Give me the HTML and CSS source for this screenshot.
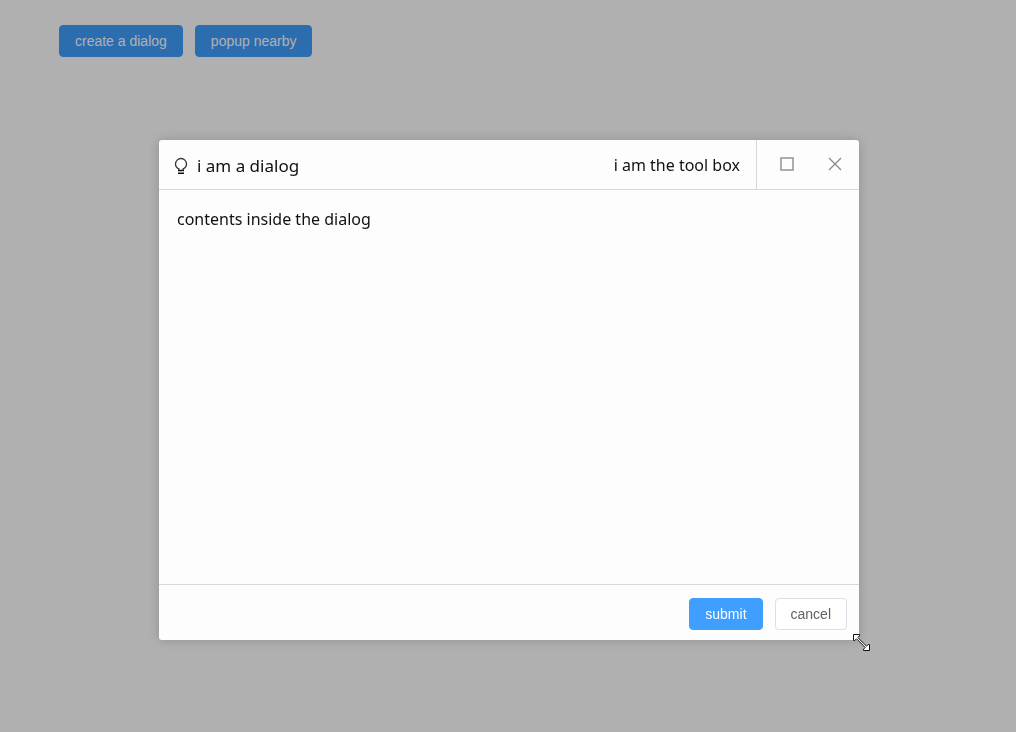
FILE: index.html
```html
<!DOCTYPE html>
<html lang="en">
<head>
<meta charset="utf-8">
<meta name="viewport" content="width=device-width, initial-scale=1">
<title>Dialog</title>
<link rel="stylesheet" href="styles.css">
</head>
<body>
<main class="page">
  <button type="button" class="btn btn-primary">create a dialog</button>
  <button type="button" class="btn btn-primary">popup nearby</button>
</main>
<div class="overlay">
  <section class="dialog" role="dialog" aria-modal="true" aria-labelledby="dialog-title">
    <header class="dialog-header">
      <div class="heading">
        <svg class="bulb" viewBox="0 0 14 18" aria-hidden="true">
          <path d="M4.8 13.2V11.8C2.6 10.9 1.5 9 1.5 7a5.5 5.5 0 0 1 11 0c0 2-1.1 3.9-3.3 4.8v1.4" fill="none" stroke="#333" stroke-width="1.3"/>
          <path d="M4 13.5h6M4 16.3h6" stroke="#111" stroke-width="1.4"/>
        </svg>
        <h1 class="dialog-title" id="dialog-title">i am a dialog</h1>
      </div>
      <div class="toolbox">i am the tool box</div>
      <div class="window-actions">
        <button type="button" class="icon-btn" aria-label="maximize">
          <svg viewBox="0 0 14 14"><rect x="1" y="1" width="12" height="12" fill="none" stroke="#999" stroke-width="1.6"/></svg>
        </button>
        <button type="button" class="icon-btn" aria-label="close">
          <svg viewBox="0 0 14 14"><path d="M1 1l12 12M13 1L1 13" fill="none" stroke="#8c8c8c" stroke-width="1.4"/></svg>
        </button>
      </div>
    </header>
    <div class="dialog-body">contents inside the dialog</div>
    <footer class="dialog-footer">
      <button type="button" class="btn btn-primary">submit</button>
      <button type="button" class="btn">cancel</button>
    </footer>
    <svg class="resize-cursor" viewBox="0 0 17 17" aria-hidden="true">
      <path d="M.5.5h6v1.3L4.8 3.5l8.7 8.7 1.7-1.7h1.3v6h-6v-1.3l1.7-1.7-8.7-8.7-1.7 1.7H.5z" fill="#fff" stroke="#111" stroke-width="1"/>
    </svg>
  </section>
</div>
</body>
</html>
```
FILE: styles.css
```css
* { box-sizing: border-box; }

body {
  margin: 0;
  min-height: 100vh;
  background: #fff;
  color: #111;
  font: 16px/24px "Noto Sans", "Open Sans", sans-serif;
}

.page {
  display: flex;
  gap: 12px;
  padding: 25px 59px;
}

.btn {
  height: 32px;
  padding: 0 15px;
  border: 1px solid #dcdfe6;
  border-radius: 4px;
  background: #fff;
  color: #606266;
  font: 14px/14px "Liberation Sans", Arial, sans-serif;
}

.btn-primary {
  border-color: #409eff;
  background: #409eff;
  color: #fff;
}

.overlay {
  position: fixed;
  inset: 0;
  background: rgba(0, 0, 0, 0.31);
}

.dialog {
  position: absolute;
  top: 140px;
  left: 159px;
  display: flex;
  flex-direction: column;
  width: 700px;
  min-height: 500px;
  border-radius: 3px;
  background: #fdfdfd;
  box-shadow: 0 0 12px rgba(0, 0, 0, 0.2);
}

.dialog-header {
  display: flex;
  align-items: center;
  height: 50px;
  padding-left: 15px;
  border-bottom: 1px solid #d8d8d8;
}

.heading {
  flex: 1;
  display: flex;
  align-items: center;
  gap: 9px;
  padding-top: 2px;
}

.bulb {
  width: 14px;
  height: 18px;
}

.dialog-title {
  margin: 0;
  font-size: 17px;
  font-weight: 400;
}

.toolbox { padding-right: 16px; }

.window-actions {
  display: flex;
  align-items: center;
  gap: 24px;
  height: 100%;
  padding: 0 12px 2px 18px;
  border-left: 1px solid #d8d8d8;
}

.icon-btn {
  display: grid;
  place-items: center;
  width: 24px;
  height: 24px;
  padding: 0;
  border: 0;
  background: none;
}

.icon-btn svg {
  width: 14px;
  height: 14px;
}

.dialog-body {
  flex: 1;
  padding: 17px 18px;
}

.dialog-footer {
  display: flex;
  justify-content: flex-end;
  align-items: center;
  gap: 12px;
  height: 56px;
  padding: 3px 12px 0;
  border-top: 1px solid #d8d8d8;
}

.resize-cursor {
  position: absolute;
  right: -11px;
  bottom: -11px;
  width: 17px;
  height: 17px;
}
```
